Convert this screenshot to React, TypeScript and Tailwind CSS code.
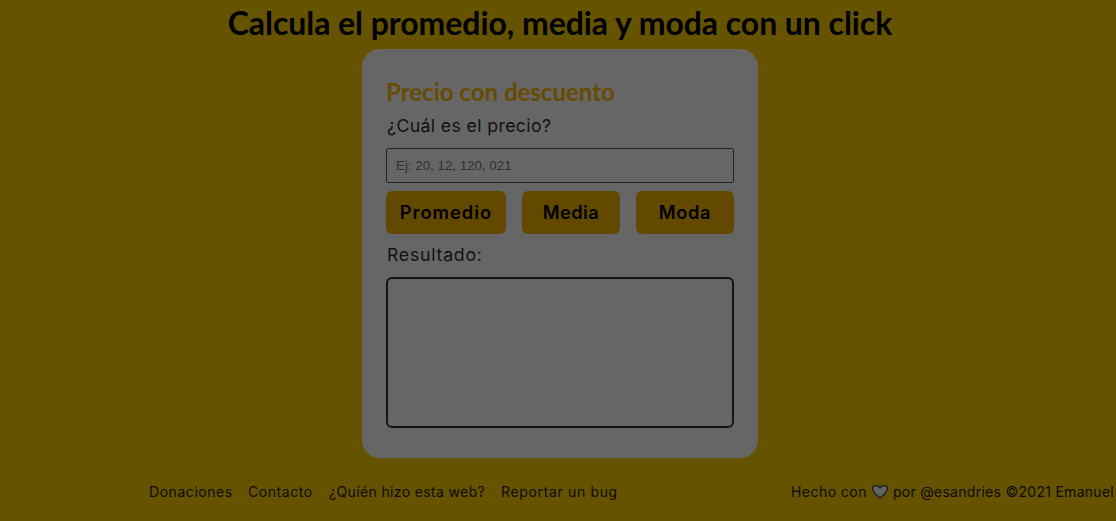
const links = [
  { label: 'Donaciones', style: 'w-[83px] tracking-[0.55px]' },
  { label: 'Contacto', style: 'w-[65px] tracking-[0.55px]' },
  { label: '¿Quíén hizo esta web?', style: 'w-[156px] tracking-[0.36px]' },
  { label: 'Reportar un bug', style: 'w-[118px] tracking-[0.65px]' },
];

const operations = [
  { label: 'Promedio', style: 'w-[120px] tracking-[1px]' },
  { label: 'Media', style: 'w-[98px] tracking-[0.4px]' },
  { label: 'Moda', style: 'w-[98px] tracking-[0.6px]' },
];

function Heart() {
  return (
    <svg viewBox="0 0 18 16" className="mx-1 h-4 w-[18px] shrink-0" aria-label="corazón">
      <path d="M9 14.2C6.8 11.8 1.6 8.5 1.6 5.1C1.6 3.1 3 1.7 4.9 1.7C6.7 1.7 8.3 2.5 9 3.7C9.7 2.5 11.3 1.7 13.1 1.7C15 1.7 16.4 3.1 16.4 5.1C16.4 8.5 11.2 11.8 9 14.2Z" fill="#646464" stroke="#191b1d" strokeWidth="1.3" />
    </svg>
  );
}

export default function App() {
  return (
    <div className="h-[521px] overflow-hidden">
      <main className="flex h-full w-[1120px] flex-col items-center bg-[#655300] font-['Inter',sans-serif] text-black">
        <h1 className="h-[49px] pt-[3px] text-center font-['Lato',sans-serif] text-[32px] leading-[40px] font-bold tracking-[-0.06px] whitespace-nowrap">
          Calcula el promedio, media y moda con un click
        </h1>
        <section className="flex h-[409px] w-[396px] flex-col rounded-[18px] bg-[#666666] px-6 pt-7">
          <h2 className="h-8 font-['Lato',sans-serif] text-2xl leading-[30px] font-bold text-[#664b00]">Precio con descuento</h2>
          <label htmlFor="prices" className="h-[39px] pl-px text-[17.7px] leading-[34px] tracking-[0.37px] text-[#111111]">
            ¿Cuál es el precio?
          </label>
          <input
            id="prices"
            placeholder="Ej: 20, 12, 120, 021"
            className="h-[35px] w-full rounded-[2px] border border-[#242424] bg-transparent px-[9px] font-['Liberation_Sans',sans-serif] text-[13.333px] outline-none placeholder:text-[#303030]"
          />
          <div className="mt-2 flex justify-between">
            {operations.map((operation) => (
              <button key={operation.label} className={`h-[43px] rounded-md bg-[#634900] text-[18.3px] font-semibold ${operation.style}`}>
                {operation.label}
              </button>
            ))}
          </div>
          <p className="h-[43px] pl-px text-[17.7px] leading-[42px] tracking-[0.75px] text-[#111111]">Resultado:</p>
          <output className="h-[151px] w-full rounded-md border-2 border-[#141414]" />
        </section>
        <footer className="flex h-[63px] w-full items-start pt-[23px] pl-[149px] text-sm leading-[22px] whitespace-nowrap text-[#0c0b05]">
          <nav className="flex w-[642px] gap-4">
            {links.map((link) => (
              <a key={link.label} href="#" className={link.style}>{link.label}</a>
            ))}
          </nav>
          <p className="flex items-center">
            <span className="tracking-[0.45px]">Hecho con</span>
            <Heart />
            <span className="tracking-[0.28px]">por @esandries ©2021 Emanuel</span>
          </p>
        </footer>
      </main>
    </div>
  );
}
